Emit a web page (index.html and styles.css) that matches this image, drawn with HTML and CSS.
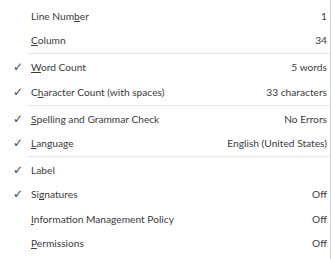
FILE: index.html
```html
<!DOCTYPE html>
<html>
<head>
<meta charset="utf-8">
<link rel="stylesheet" href="styles.css">
</head>
<body>
<div class="menu">
  <div class="row"><span class="chk"></span><span class="lbl">Line Num<u>b</u>er</span><span class="val">1</span></div>
  <div class="row"><span class="chk"></span><span class="lbl"><u>C</u>olumn</span><span class="val">34</span></div>
  <div class="sep"></div>
  <div class="row"><span class="chk">✓</span><span class="lbl"><u>W</u>ord Count</span><span class="val">5 words</span></div>
  <div class="row"><span class="chk">✓</span><span class="lbl">C<u>h</u>aracter Count (with spaces)</span><span class="val">33 characters</span></div>
  <div class="sep"></div>
  <div class="row"><span class="chk">✓</span><span class="lbl"><u>S</u>pelling and Grammar Check</span><span class="val">No Errors</span></div>
  <div class="row"><span class="chk">✓</span><span class="lbl"><u>L</u>anguage</span><span class="val">English (United States)</span></div>
  <div class="sep"></div>
  <div class="row"><span class="chk">✓</span><span class="lbl">Label</span><span class="val"></span></div>
  <div class="row"><span class="chk">✓</span><span class="lbl">Si<u>g</u>natures</span><span class="val">Off</span></div>
  <div class="row"><span class="chk"></span><span class="lbl"><u>I</u>nformation Management Policy</span><span class="val">Off</span></div>
  <div class="row"><span class="chk"></span><span class="lbl"><u>P</u>ermissions</span><span class="val">Off</span></div>
</div>
</body>
</html>
```
FILE: styles.css
```css
html, body {
  margin: 0;
  padding: 0;
  background: #ffffff;
}
.menu {
  width: 331px;
  height: 259px;
  border-right: 1px solid #d6d6d6;
  padding-top: 4px;
  box-sizing: border-box;
  font-family: "Lato", "Open Sans", sans-serif;
  font-size: 10.2px;
  color: #3b3b3b;
}
.row {
  display: flex;
  align-items: center;
  height: 24.2px;
}
.chk {
  width: 31px;
  padding-left: 13px;
  box-sizing: border-box;
  font-family: "DejaVu Sans", sans-serif;
  font-size: 12px;
  color: #444;
}
.lbl {
  flex: 1;
  white-space: nowrap;
}
.val {
  padding-right: 3px;
  white-space: nowrap;
}
u {
  text-decoration-thickness: 1px;
  text-underline-offset: 1px;
}
.sep {
  height: 1px;
  margin: 1px 0 1px 27px;
  background: #e6e6e6;
}
```
